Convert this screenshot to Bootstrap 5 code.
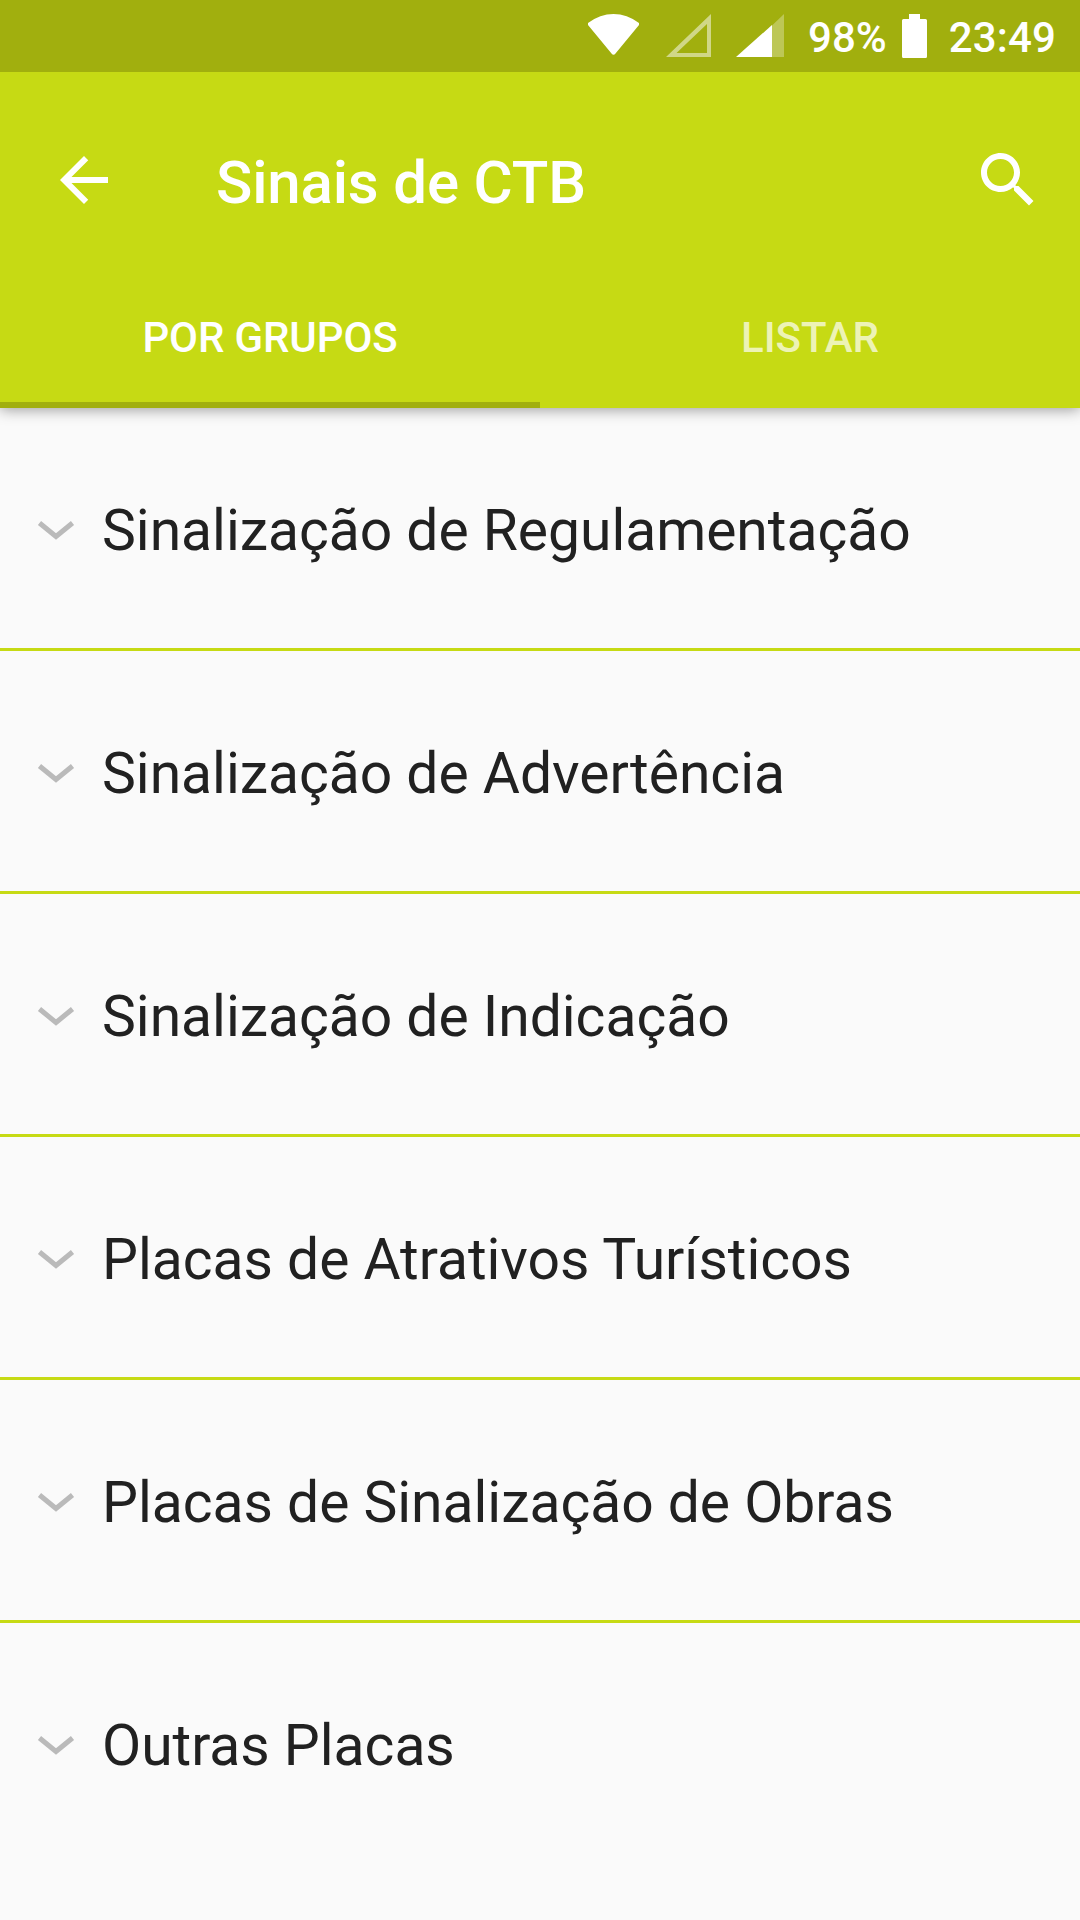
<!DOCTYPE html>
<html lang="pt-BR">
<head>
<meta charset="utf-8">
<meta name="viewport" content="width=device-width, initial-scale=1">
<title>Sinais de CTB</title>
<link href="https://cdn.jsdelivr.net/npm/bootstrap@5.3.0/dist/css/bootstrap.min.css" rel="stylesheet">
<style>
body{font-family:Roboto,"Noto Sans",sans-serif;background:#fafafa;color:#212121;height:1920px;overflow:hidden}
svg{display:block;flex:none}
.status-bar{height:72px;background:#a1af0e;font-size:42px;font-weight:500;line-height:72px;padding-right:24px;position:relative;z-index:2}
.battery-level,.clock{height:72px;line-height:75px}
.clock{letter-spacing:.15px}
.signal-icons{margin-right:23px}
.battery{margin:0 22px 0 15px}
.app-header{background:#c6da14;box-shadow:0 1px 14px rgba(0,0,0,.42);z-index:1}
.toolbar{height:192px;padding:24px 36px 0 48px}
.toolbar-title{font-size:60px;font-weight:500;line-height:72px;letter-spacing:-.17px;margin-left:96px;padding-top:5px}
.tab-link{height:144px;font-size:42px;font-weight:500;color:rgba(255,255,255,.7);border-radius:0;border-bottom:6px solid transparent;padding:9px 0 0}
.tab-link:hover{color:#fff}
.tab-link.active{color:#fff;letter-spacing:-.12px;border-bottom-color:#a1af0e}
.list-group-flush>.group-row{height:243px;padding:0 36px;border-width:0 0 3px;border-color:#c6da14;background:transparent;color:#212121;font-size:57px;line-height:68px;letter-spacing:-.03px}
.list-group-flush>.group-row:last-child{border-width:0 0 3px;border-bottom-color:transparent}
.group-row svg{margin-top:4px}
.group-label{margin-left:26px;padding-top:5px}
</style>
<script src="https://cdn.jsdelivr.net/npm/bootstrap@5.3.0/dist/js/bootstrap.bundle.min.js"></script>
</head>
<body>
<div class="status-bar d-flex justify-content-end align-items-center text-white">
  <svg class="signal-icons" width="197" height="72" viewBox="588 0 197 72" fill="#fff">
    <path d="M588 23Q600 14 613.500 14T639 23L639 25L615.500 53.500Q613.500 56 611.500 53.500L588 25Z"/>
    <path opacity=".5" fill-rule="evenodd" d="M666 57L711 14V57ZM676.500 53H707V24Z"/>
    <path opacity=".3" d="M772 57V25.500L784 14V57Z"/>
    <path d="M736 57L772 25V57Z"/>
  </svg>
  <span class="battery-level">98%</span>
  <svg class="battery" width="25" height="72" viewBox="901 0 25 72" fill="#fff"><path d="M908 14H919V19H924.500Q926 19 926 20.500V56.500Q926 58 924.500 58H902.500Q901 58 901 56.500V20.500Q901 19 902.500 19H908Z"/></svg>
  <span class="clock">23:49</span>
</div>
<header class="app-header text-white position-relative">
  <div class="toolbar d-flex align-items-center">
    <svg width="72" height="72" viewBox="0 0 24 24" fill="#fff"><path d="M20 11H7.830l5.590-5.590L12 4l-8 8 8 8 1.410-1.410L7.830 13H20v-2z"/></svg>
    <h1 class="toolbar-title mb-0 flex-grow-1">Sinais de CTB</h1>
    <svg width="72" height="72" viewBox="0 0 24 24" fill="#fff"><path d="M15.500 14h-.790l-.280-.270C15.410 12.590 16 11.110 16 9.500 16 5.910 13.090 3 9.500 3S3 5.910 3 9.500 5.910 16 9.500 16c1.610 0 3.090-.590 4.230-1.570l.270.280v.790l5 4.990L20.490 19l-4.990-5zm-6 0C7.010 14 5 11.990 5 9.500S7.010 5 9.500 5 14 7.010 14 9.500 11.990 14 9.500 14z"/></svg>
  </div>
  <nav class="nav nav-fill flex-nowrap">
    <a class="tab-link nav-link active d-flex align-items-center justify-content-center w-50" href="#">POR GRUPOS</a>
    <a class="tab-link nav-link d-flex align-items-center justify-content-center w-50" href="#">LISTAR</a>
  </nav>
</header>
<main class="list-group list-group-flush">
  <a class="group-row list-group-item d-flex align-items-center" href="#"><svg width="40" height="24" viewBox="0 0 40 24" fill="none" stroke="#bababa" stroke-width="5"><path d="M3.500 5L20 18.500L36.500 5"/></svg><span class="group-label">Sinalização de Regulamentação</span></a>
  <a class="group-row list-group-item d-flex align-items-center" href="#"><svg width="40" height="24" viewBox="0 0 40 24" fill="none" stroke="#bababa" stroke-width="5"><path d="M3.500 5L20 18.500L36.500 5"/></svg><span class="group-label">Sinalização de Advertência</span></a>
  <a class="group-row list-group-item d-flex align-items-center" href="#"><svg width="40" height="24" viewBox="0 0 40 24" fill="none" stroke="#bababa" stroke-width="5"><path d="M3.500 5L20 18.500L36.500 5"/></svg><span class="group-label">Sinalização de Indicação</span></a>
  <a class="group-row list-group-item d-flex align-items-center" href="#"><svg width="40" height="24" viewBox="0 0 40 24" fill="none" stroke="#bababa" stroke-width="5"><path d="M3.500 5L20 18.500L36.500 5"/></svg><span class="group-label">Placas de Atrativos Turísticos</span></a>
  <a class="group-row list-group-item d-flex align-items-center" href="#"><svg width="40" height="24" viewBox="0 0 40 24" fill="none" stroke="#bababa" stroke-width="5"><path d="M3.500 5L20 18.500L36.500 5"/></svg><span class="group-label">Placas de Sinalização de Obras</span></a>
  <a class="group-row list-group-item d-flex align-items-center" href="#"><svg width="40" height="24" viewBox="0 0 40 24" fill="none" stroke="#bababa" stroke-width="5"><path d="M3.500 5L20 18.500L36.500 5"/></svg><span class="group-label">Outras Placas</span></a>
</main>
</body>
</html>
